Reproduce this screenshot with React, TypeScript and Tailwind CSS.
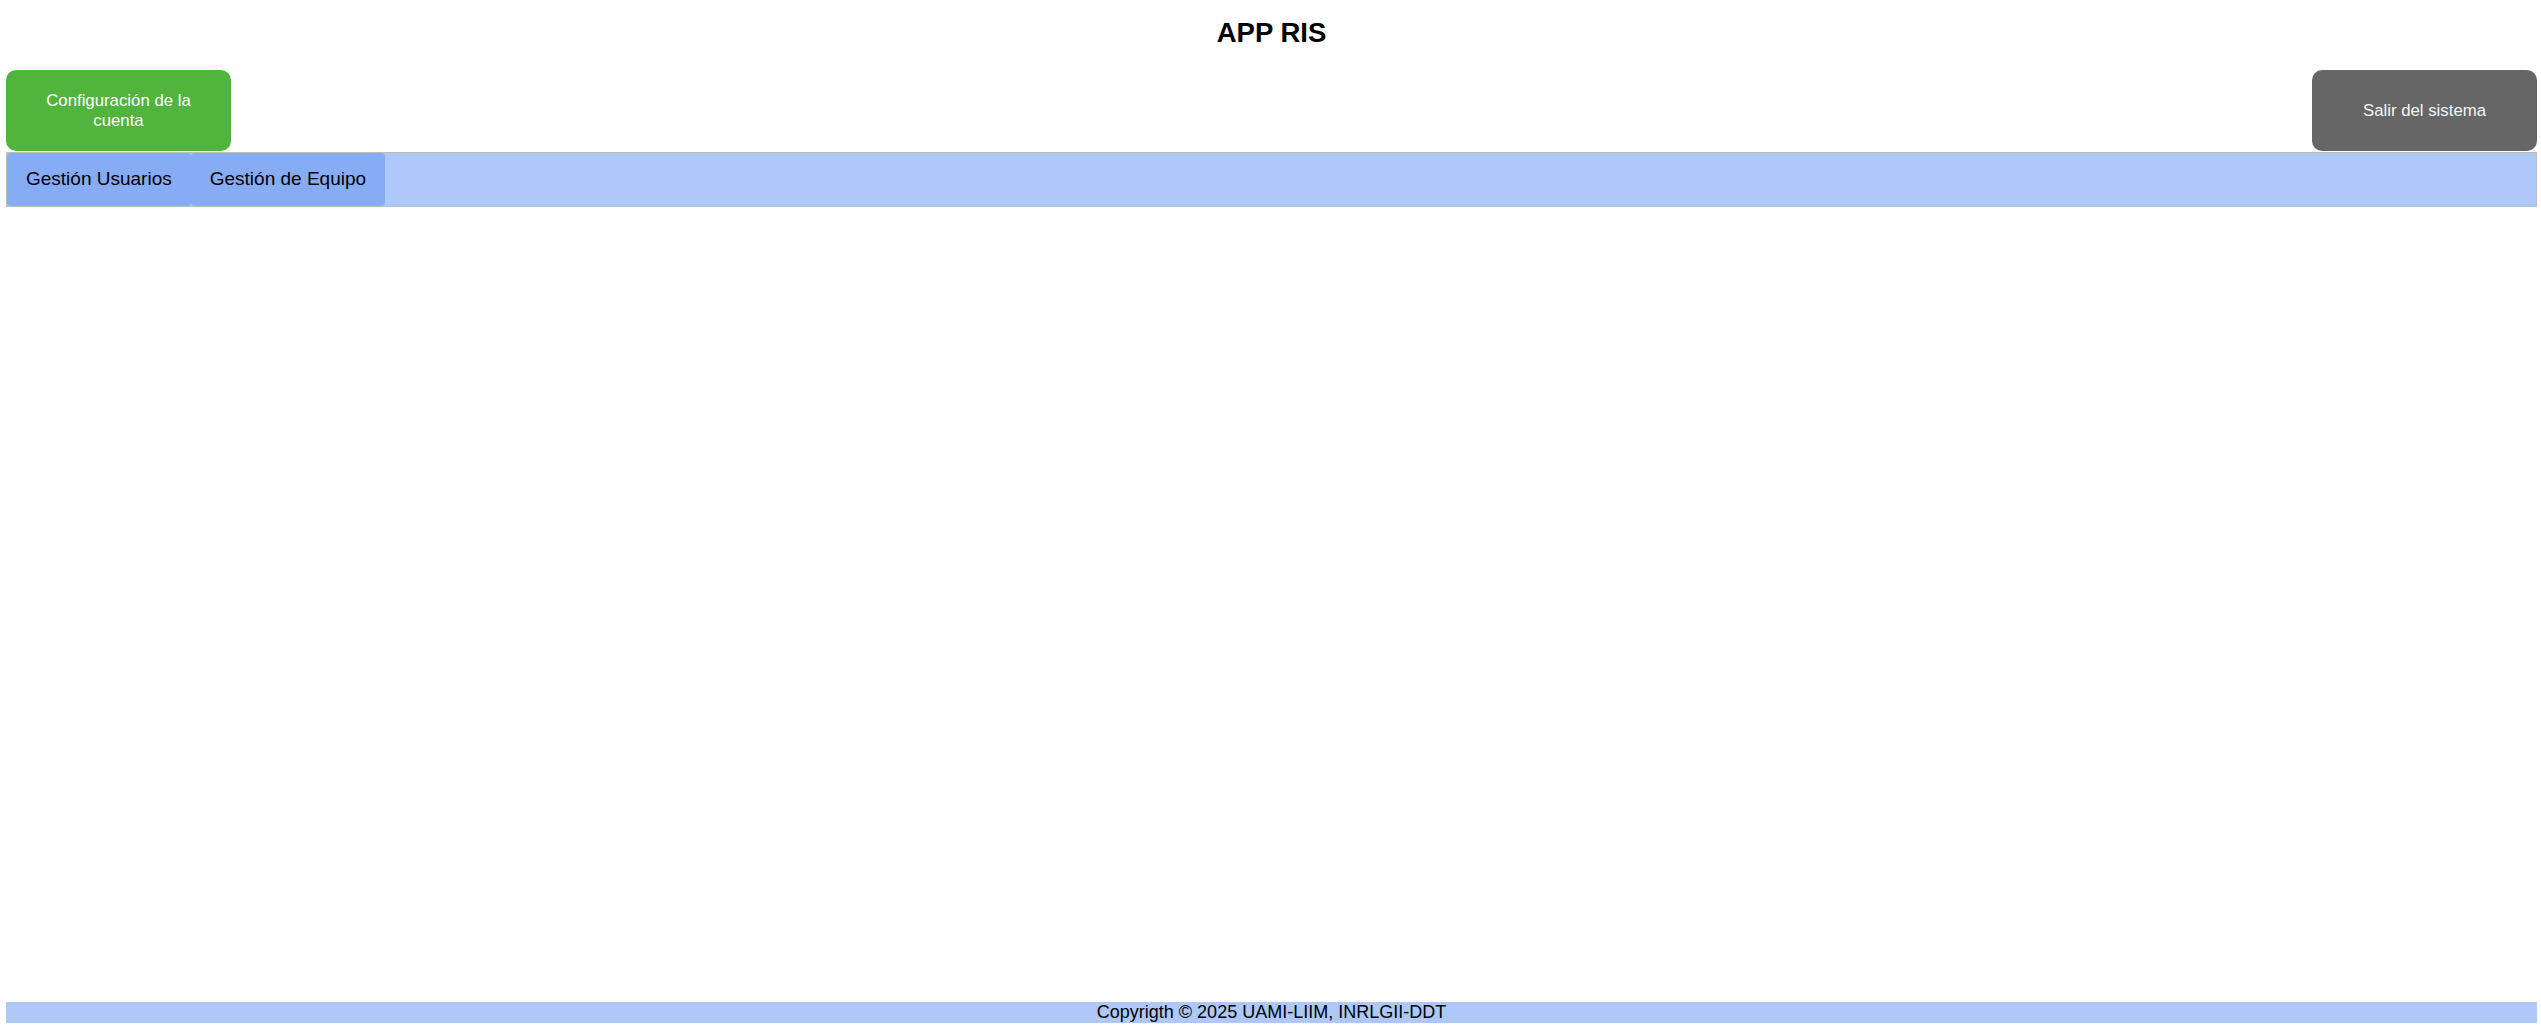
import React from "react";

export default function App() {
  return (
    <div
      className="min-h-screen flex flex-col bg-white text-black pl-[6px] pr-[4px] pb-[4px]"
      style={{ fontFamily: '"Liberation Sans", Arial, sans-serif' }}
    >
      <div className="pt-[16px] text-center">
        <h2 className="text-[27.5px] leading-[33px] font-bold">APP RIS</h2>
      </div>
      <div className="mt-[21px] flex justify-between items-stretch">
        <button className="w-[225px] h-[81px] rounded-[10px] bg-[#51b43c] text-white text-[16.8px] leading-[20px] px-[20px]">
          Configuración de la cuenta
        </button>
        <button className="w-[225px] h-[81px] rounded-[10px] bg-[#666666] text-[#f5f5f5] text-[16.8px] leading-[20px]">
          Salir del sistema
        </button>
      </div>
      <div className="mt-[1px] h-[55px] border border-[#bdbdbd] bg-[#adc8f9] flex">
        <button className="h-full px-[19px] rounded-[4px] bg-[#87acf6] text-[19px] text-black">
          Gestión Usuarios
        </button>
        <button className="h-full px-[19px] rounded-[4px] bg-[#87acf6] text-[19px] text-black">
          Gestión de Equipo
        </button>
      </div>
      <div className="flex-1" />
      <footer className="h-[21px] bg-[#adc8f9] text-center text-[18px] leading-[21px]">
        Copyrigth © 2025 UAMI-LIIM, INRLGII-DDT
      </footer>
    </div>
  );
}
